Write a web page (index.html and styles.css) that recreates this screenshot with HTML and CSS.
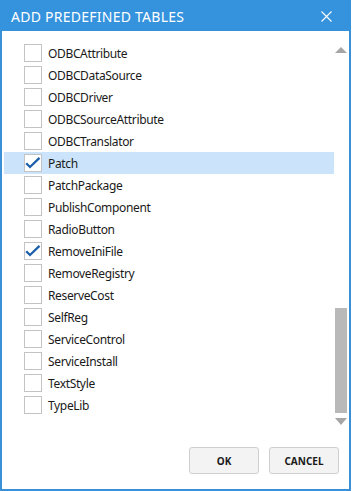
FILE: index.html
```html
<!DOCTYPE html>
<html>
<head>
<meta charset="utf-8">
<link rel="stylesheet" href="styles.css">
</head>
<body>
<div class="window">
  <div class="titlebar">
    <span class="title">ADD PREDEFINED TABLES</span>
    <svg class="close" width="11" height="11" viewBox="0 0 11 11"><path d="M0.5 0.5 L10.5 10.5 M10.5 0.5 L0.5 10.5" stroke="#fff" stroke-width="1.1" fill="none"/></svg>
  </div>
  <div class="main">
    <div class="list">
      <div class="row"><span class="box"></span><span class="label">ODBCAttribute</span></div>
      <div class="row"><span class="box"></span><span class="label">ODBCDataSource</span></div>
      <div class="row"><span class="box"></span><span class="label">ODBCDriver</span></div>
      <div class="row"><span class="box"></span><span class="label">ODBCSourceAttribute</span></div>
      <div class="row"><span class="box"></span><span class="label">ODBCTranslator</span></div>
      <div class="row selected"><span class="box"><svg width="16" height="16" viewBox="0 0 16 16"><path d="M1.2 8.2 L5 12 L14.5 2.8" stroke="#1c5fab" stroke-width="2.3" fill="none"/></svg></span><span class="label">Patch</span></div>
      <div class="row"><span class="box"></span><span class="label">PatchPackage</span></div>
      <div class="row"><span class="box"></span><span class="label">PublishComponent</span></div>
      <div class="row"><span class="box"></span><span class="label">RadioButton</span></div>
      <div class="row"><span class="box"><svg width="16" height="16" viewBox="0 0 16 16"><path d="M1.2 8.2 L5 12 L14.5 2.8" stroke="#1c5fab" stroke-width="2.3" fill="none"/></svg></span><span class="label">RemoveIniFile</span></div>
      <div class="row"><span class="box"></span><span class="label">RemoveRegistry</span></div>
      <div class="row"><span class="box"></span><span class="label">ReserveCost</span></div>
      <div class="row"><span class="box"></span><span class="label">SelfReg</span></div>
      <div class="row"><span class="box"></span><span class="label">ServiceControl</span></div>
      <div class="row"><span class="box"></span><span class="label">ServiceInstall</span></div>
      <div class="row"><span class="box"></span><span class="label">TextStyle</span></div>
      <div class="row"><span class="box"></span><span class="label">TypeLib</span></div>
    </div>
    <div class="scrollbar">
      <svg class="arrow-up" width="12" height="6" viewBox="0 0 12 6"><path d="M0 6 L6 0 L12 6 Z" fill="#a6a6a6"/></svg>
      <div class="thumb"></div>
      <svg class="arrow-down" width="12" height="7" viewBox="0 0 12 7"><path d="M0 0 L12 0 L6 7 Z" fill="#a6a6a6"/></svg>
    </div>
  </div>
  <div class="footer">
    <button class="btn">OK</button>
    <button class="btn">CANCEL</button>
  </div>
</div>
</body>
</html>
```

FILE: styles.css
```css
html, body {
  margin: 0;
  padding: 0;
  background: #ffffff;
}
body {
  font-family: "Noto Sans", "Open Sans", sans-serif;
}
.window {
  width: 351px;
  height: 491px;
  box-sizing: border-box;
  border: 2px solid #3a8fd9;
  border-top: none;
  display: flex;
  flex-direction: column;
  background: #ffffff;
}
.titlebar {
  height: 31px;
  margin: 0 -2px;
  background: #3592dd;
  display: flex;
  align-items: center;
  justify-content: space-between;
  padding: 0 19px 0 11px;
  box-sizing: border-box;
}
.title {
  color: #ffffff;
  font-size: 14px;
  letter-spacing: 0.25px;
  padding-top: 2px;
}
.close {
  display: block;
  margin-top: 1px;
}
.main {
  flex: 1;
  display: flex;
  padding-top: 11px;
}
.list {
  width: 330px;
  margin-left: 2px;
}
.row {
  height: 22px;
  display: flex;
  align-items: center;
  padding-left: 20px;
}
.row.selected {
  background: #cce4fb;
}
.box {
  width: 18px;
  height: 18px;
  box-sizing: border-box;
  border: 1px solid #c3c3c3;
  background: #ffffff;
  display: flex;
  align-items: center;
  justify-content: center;
}
.box svg {
  display: block;
}
.label {
  margin-left: 6px;
  font-size: 12px;
  color: #1a1a1a;
  letter-spacing: -0.35px;
}
.scrollbar {
  width: 12px;
  margin-left: 1px;
  display: flex;
  flex-direction: column;
  padding-top: 5px;
}
.arrow-up {
  display: block;
}
.thumb {
  margin-top: 255px;
  height: 105px;
  background: #b9b9b9;
}
.arrow-down {
  display: block;
  margin-top: 5px;
}
.footer {
  display: flex;
  justify-content: flex-end;
  gap: 10px;
  padding: 0 10px 15px 0;
}
.btn {
  width: 70px;
  height: 27px;
  box-sizing: border-box;
  border: 1px solid #cfcfcf;
  border-radius: 3px;
  background: #f3f3f3;
  font-family: "Noto Sans", "Open Sans", sans-serif;
  font-weight: bold;
  font-size: 10px;
  color: #1a1a1a;
  padding: 0;
}
```
